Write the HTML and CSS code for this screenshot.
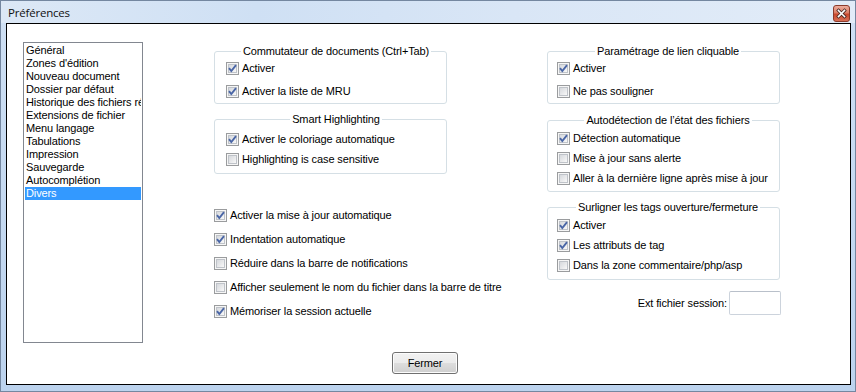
FILE: index.html
```html
<!DOCTYPE html>
<html lang="fr">
<head>
<meta charset="utf-8">
<title>Préférences</title>
<link rel="stylesheet" href="styles.css">
</head>
<body>
<div class="window">
  <div class="titlebar">
    <span class="title">Préférences</span>
    <span class="close">
      <svg width="17" height="17" viewBox="0 0 17 17">
        <defs>
          <linearGradient id="cg" x1="0" y1="0" x2="0" y2="1">
            <stop offset="0" stop-color="#eeb1a2"/>
            <stop offset="0.45" stop-color="#dc7d66"/>
            <stop offset="0.55" stop-color="#c9472c"/>
            <stop offset="1" stop-color="#d9735a"/>
          </linearGradient>
        </defs>
        <rect x="0.5" y="0.5" width="16" height="16" rx="2.5" fill="url(#cg)" stroke="#8a3b2c"/>
        <path d="M5.5 5.5 L11.5 11.5 M11.5 5.5 L5.5 11.5" stroke="#4a2a24" stroke-width="3.2" stroke-linecap="square"/>
        <path d="M5.5 5.5 L11.5 11.5 M11.5 5.5 L5.5 11.5" stroke="#ffffff" stroke-width="1.6" stroke-linecap="square"/>
      </svg>
    </span>
  </div>
  <div class="client">
    <div class="main">
      <div class="listbox">
        <div class="item">Général</div>
        <div class="item">Zones d'édition</div>
        <div class="item">Nouveau document</div>
        <div class="item">Dossier par défaut</div>
        <div class="item">Historique des fichiers récents</div>
        <div class="item">Extensions de fichier</div>
        <div class="item">Menu langage</div>
        <div class="item">Tabulations</div>
        <div class="item">Impression</div>
        <div class="item">Sauvegarde</div>
        <div class="item">Autocomplétion</div>
        <div class="item sel">Divers</div>
      </div>

      <div class="col col-left">
        <div class="group lg1">
          <span class="legend">Commutateur de documents (Ctrl+Tab)</span>
          <div class="rows">
            <label class="cbrow"><span class="cb on"><svg viewBox="0 0 13 13"><path d="M3 6.2 L5.3 9 L10 3.2" fill="none" stroke="#4a66a6" stroke-width="1.9"/></svg></span>Activer</label>
            <label class="cbrow"><span class="cb on"><svg viewBox="0 0 13 13"><path d="M3 6.2 L5.3 9 L10 3.2" fill="none" stroke="#4a66a6" stroke-width="1.9"/></svg></span>Activer la liste de MRU</label>
          </div>
        </div>
        <div class="group lg2">
          <span class="legend">Smart Highlighting</span>
          <div class="rows">
            <label class="cbrow"><span class="cb on"><svg viewBox="0 0 13 13"><path d="M3 6.2 L5.3 9 L10 3.2" fill="none" stroke="#4a66a6" stroke-width="1.9"/></svg></span>Activer le coloriage automatique</label>
            <label class="cbrow"><span class="cb"></span>Highlighting is case sensitive</label>
          </div>
        </div>
        <div class="plain">
          <label class="cbrow"><span class="cb on"><svg viewBox="0 0 13 13"><path d="M3 6.2 L5.3 9 L10 3.2" fill="none" stroke="#4a66a6" stroke-width="1.9"/></svg></span>Activer la mise à jour automatique</label>
          <label class="cbrow"><span class="cb on"><svg viewBox="0 0 13 13"><path d="M3 6.2 L5.3 9 L10 3.2" fill="none" stroke="#4a66a6" stroke-width="1.9"/></svg></span>Indentation automatique</label>
          <label class="cbrow"><span class="cb"></span>Réduire dans la barre de notifications</label>
          <label class="cbrow"><span class="cb"></span>Afficher seulement le nom du fichier dans la barre de titre</label>
          <label class="cbrow"><span class="cb on"><svg viewBox="0 0 13 13"><path d="M3 6.2 L5.3 9 L10 3.2" fill="none" stroke="#4a66a6" stroke-width="1.9"/></svg></span>Mémoriser la session actuelle</label>
        </div>
      </div>

      <div class="col col-right">
        <div class="group rg1">
          <span class="legend">Paramétrage de lien cliquable</span>
          <div class="rows">
            <label class="cbrow"><span class="cb on"><svg viewBox="0 0 13 13"><path d="M3 6.2 L5.3 9 L10 3.2" fill="none" stroke="#4a66a6" stroke-width="1.9"/></svg></span>Activer</label>
            <label class="cbrow"><span class="cb"></span>Ne pas souligner</label>
          </div>
        </div>
        <div class="group rg2">
          <span class="legend">Autodétection de l’état des fichiers</span>
          <div class="rows">
            <label class="cbrow"><span class="cb on"><svg viewBox="0 0 13 13"><path d="M3 6.2 L5.3 9 L10 3.2" fill="none" stroke="#4a66a6" stroke-width="1.9"/></svg></span>Détection automatique</label>
            <label class="cbrow"><span class="cb"></span>Mise à jour sans alerte</label>
            <label class="cbrow"><span class="cb"></span>Aller à la dernière ligne après mise à jour</label>
          </div>
        </div>
        <div class="group rg3">
          <span class="legend">Surligner les tags ouverture/fermeture</span>
          <div class="rows">
            <label class="cbrow"><span class="cb on"><svg viewBox="0 0 13 13"><path d="M3 6.2 L5.3 9 L10 3.2" fill="none" stroke="#4a66a6" stroke-width="1.9"/></svg></span>Activer</label>
            <label class="cbrow"><span class="cb on"><svg viewBox="0 0 13 13"><path d="M3 6.2 L5.3 9 L10 3.2" fill="none" stroke="#4a66a6" stroke-width="1.9"/></svg></span>Les attributs de tag</label>
            <label class="cbrow"><span class="cb"></span>Dans la zone commentaire/php/asp</label>
          </div>
        </div>
        <div class="extrow">
          <span>Ext fichier session:</span>
          <span class="input"></span>
        </div>
      </div>
    </div>
    <div class="footer">
      <span class="button">Fermer</span>
    </div>
  </div>
</div>
</body>
</html>
```

FILE: styles.css
```css
* { box-sizing: border-box; }

html, body {
  margin: 0;
  padding: 0;
  background: #fff;
}

body {
  font-family: "Liberation Sans", Arial, sans-serif;
  font-size: 11px;
  letter-spacing: -0.12px;
  color: #000;
}

.window {
  width: 856px;
  height: 392px;
  border: 1px solid #7487a0;
  background: linear-gradient(to bottom, #cfe0f4, #bcd3ee);
  display: flex;
  flex-direction: column;
}

.titlebar {
  height: 22px;
  flex: none;
  display: flex;
  align-items: flex-start;
  padding-left: 7px;
  background: linear-gradient(to right, #dce8f6 0%, #cfe0f4 30%, #d9e6f6 60%, #e2ecf8 100%);
}

.title {
  font-family: "Open Sans", "Noto Sans", sans-serif;
  font-size: 11.5px;
  letter-spacing: -0.2px;
  line-height: 15px;
  margin-top: 4px;
  color: #111;
}

.close {
  margin-left: auto;
  margin-right: 5px;
  margin-top: 4px;
  width: 17px;
  height: 17px;
  display: flex;
}

.client {
  flex: 1;
  margin: 0 4px 6px 5px;
  border: 1px solid #000;
  background: #fff;
  padding: 18px 0 0 16px;
  display: flex;
  flex-direction: column;
}

.main {
  display: flex;
  align-items: flex-start;
}

.listbox {
  width: 120px;
  height: 301px;
  flex: none;
  border: 1px solid #828790;
  padding: 1px;
  overflow: hidden;
}

.item {
  height: 13px;
  line-height: 13px;
  padding-left: 1px;
  white-space: nowrap;
  overflow: hidden;
}

.item.sel {
  background: #3399ff;
  color: #fff;
}

.col {
  width: 233px;
  flex: none;
  display: flex;
  flex-direction: column;
}

.col-left { margin-left: 71px; }
.col-right { margin-left: 100px; }

.group {
  border: 1px solid #d5dfe5;
  border-radius: 3px;
  display: flex;
  flex-direction: column;
}

.legend {
  align-self: center;
  margin-top: -7px;
  line-height: 13px;
  height: 13px;
  background: #fff;
  padding: 0 2px;
  white-space: nowrap;
}

.rows {
  display: flex;
  flex-direction: column;
}

.col-left .group { padding-left: 11px; }
.col-right .group { padding-left: 9px; }

.lg1 { margin-top: 9px; padding-bottom: 5px; }
.lg1 .rows { margin-top: 4px; gap: 10px; }

.lg2 { margin-top: 15px; padding-bottom: 7px; }
.lg2 .rows { margin-top: 7px; gap: 7px; }

.plain {
  margin-top: 35px;
  display: flex;
  flex-direction: column;
  gap: 11px;
}

.rg1 { margin-top: 9px; padding-bottom: 5px; }
.rg1 .rows { margin-top: 4px; gap: 10px; }

.rg2 { margin-top: 16px; padding-bottom: 6px; }
.rg2 .rows { margin-top: 5px; gap: 7px; }

.rg3 { margin-top: 15px; padding-bottom: 7px; }
.rg3 .rows { margin-top: 5px; gap: 7px; }

.cbrow {
  display: flex;
  align-items: center;
  height: 13px;
  line-height: 13px;
  gap: 3px;
  white-space: nowrap;
}

.cb {
  width: 13px;
  height: 13px;
  flex: none;
  border: 1px solid #9a9c9e;
  background: #f6f6f6;
  padding: 1px;
  display: grid;
}

.cb::before {
  content: "";
  grid-area: 1 / 1;
  border: 1px solid #bfc3c9;
  background: linear-gradient(135deg, #d6d9dd 0%, #e8e9eb 55%, #f9f9f9 100%);
}

.cb svg {
  grid-area: 1 / 1;
  width: 13px;
  height: 13px;
  margin: -2px;
}

.extrow {
  margin-top: 11px;
  margin-right: -1px;
  display: flex;
  justify-content: flex-end;
  align-items: center;
  gap: 2px;
}

.input {
  width: 52px;
  height: 24px;
  border: 1px solid #ccd3dc;
  border-top-color: #b9c0ca;
  border-radius: 2px;
  background: #fff;
}

.footer {
  margin-top: 9px;
  display: flex;
}

.button {
  margin-left: 369px;
  width: 66px;
  height: 22px;
  border: 1px solid #707070;
  border-radius: 3px;
  box-shadow: inset 0 0 0 1px #fcfcfc;
  background: linear-gradient(to bottom, #f2f2f2 0%, #ebebeb 50%, #dddddd 51%, #cfcfcf 100%);
  display: flex;
  align-items: center;
  justify-content: center;
  color: #000;
}
```
